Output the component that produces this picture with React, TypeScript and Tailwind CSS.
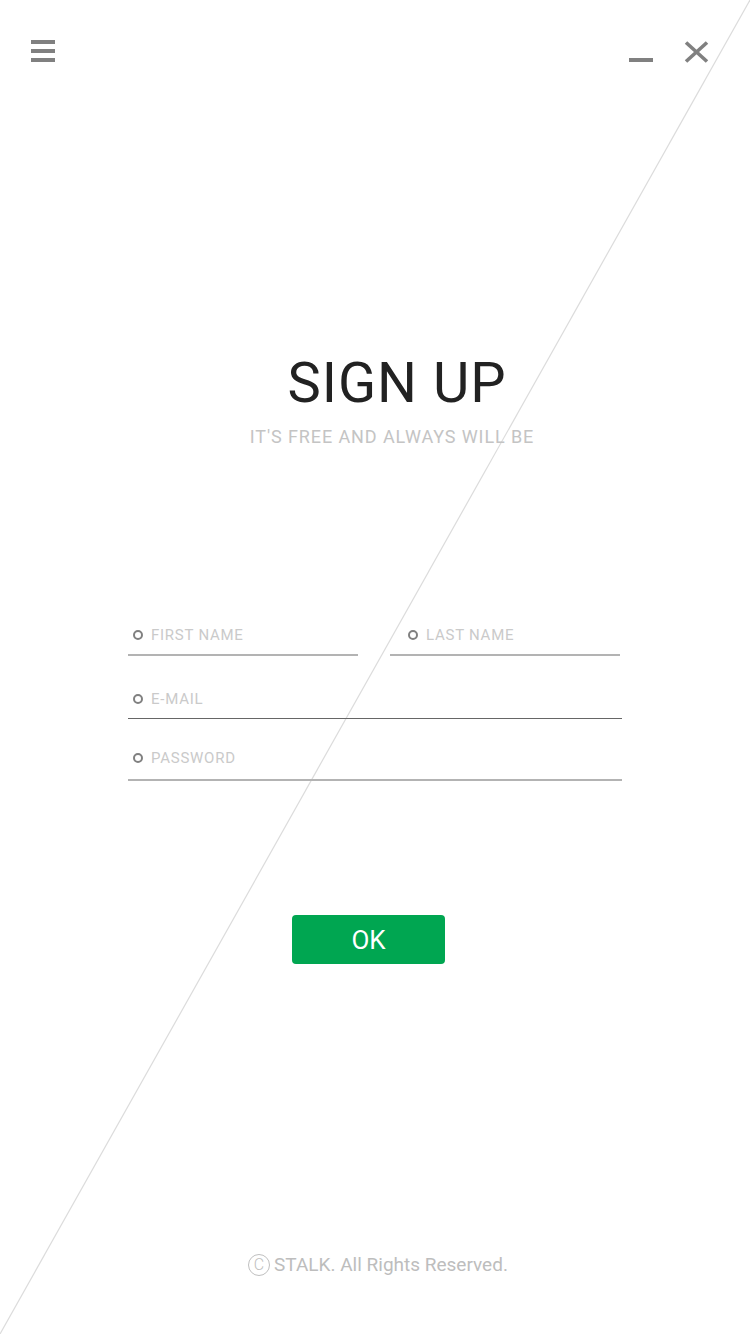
import React from "react";

const font = { fontFamily: "Roboto, 'Noto Sans', sans-serif" };

function Field({ label, pl = "pl-[5px]", line }: { label: string; pl?: string; line: string }) {
  return (
    <div className="flex flex-col">
      <div className={`flex h-[20px] items-center gap-[8px] ${pl}`}>
        <span className="box-border h-[10px] w-[10px] rounded-full border-[2px] border-[#808080]" />
        <span className="text-[15px] leading-none tracking-[0.75px] text-[#cacaca]">{label}</span>
      </div>
      <div className={line} />
    </div>
  );
}

export default function App() {
  return (
    <div className="relative h-[1334px] w-full overflow-hidden bg-white" style={font}>
      <svg className="pointer-events-none absolute inset-0" width="750" height="1334" viewBox="0 0 750 1334">
        <line x1="750" y1="0" x2="0" y2="1334" stroke="#dcdcdc" strokeWidth="1.2" />
      </svg>

      <div className="relative flex flex-col">
        {/* top bar */}
        <div className="mt-[40px] flex h-[23px] items-start justify-between pl-[31px] pr-[41px]">
          <div className="flex flex-col gap-[5px]">
            <div className="h-[4px] w-[24px] bg-[#808080]" />
            <div className="h-[4px] w-[24px] bg-[#808080]" />
            <div className="h-[4px] w-[24px] bg-[#808080]" />
          </div>
          <div className="flex items-start gap-[31px]">
            <div className="mt-[18px] h-[4px] w-[24px] bg-[#808080]" />
            <svg className="mt-[1px]" width="25" height="22" viewBox="0 0 25 22">
              <line x1="2" y1="1.5" x2="23" y2="20.5" stroke="#808080" strokeWidth="3.6" />
              <line x1="23" y1="1.5" x2="2" y2="20.5" stroke="#808080" strokeWidth="3.6" />
            </svg>
          </div>
        </div>

        {/* title */}
        <div className="mt-[292px] flex justify-center pl-[44px]">
          <h1 className="text-[56px] font-normal leading-[56px] tracking-[1px] text-[#222222]">SIGN UP</h1>
        </div>
        <div className="mt-[17px] flex justify-center pl-[34px]">
          <p className="text-[18px] leading-[18px] tracking-[0.9px] text-[#c4c4c4]">IT'S FREE AND ALWAYS WILL BE</p>
        </div>

        {/* form */}
        <div className="mx-auto mt-[179px] flex w-[494px] flex-col">
          <div className="grid grid-cols-[230px_230px] gap-x-[32px]">
            <Field label="FIRST NAME" line="mt-[9px] h-[2px] bg-[#b3b3b3]" />
            <Field label="LAST NAME" pl="pl-[18px]" line="mt-[9px] h-[2px] bg-[#b3b3b3]" />
          </div>
          <div className="mt-[33px]">
            <Field label="E-MAIL" line="mt-[9px] h-[1px] bg-[#666666]" />
          </div>
          <div className="mt-[29px]">
            <Field label="PASSWORD" line="mt-[11px] h-[2px] bg-[#b3b3b3]" />
          </div>
        </div>

        {/* button */}
        <div className="mt-[134px] flex justify-center pr-[13px]">
          <button className="flex h-[49px] w-[153px] items-center justify-center rounded-[4px] bg-[#00a651] text-[26px] font-normal leading-none text-white">
            OK
          </button>
        </div>

        {/* footer */}
        <div className="mt-[290px] flex items-center justify-center gap-[4px] pl-[6px]">
          <span className="box-border flex h-[22px] w-[22px] items-center justify-center rounded-full border-[1.5px] border-[#c0c0c0] text-[16px] font-light leading-none text-[#c0c0c0]">
            C
          </span>
          <span className="text-[19px] leading-[22px] text-[#bdbdbd]">STALK. All Rights Reserved.</span>
        </div>
      </div>
    </div>
  );
}
